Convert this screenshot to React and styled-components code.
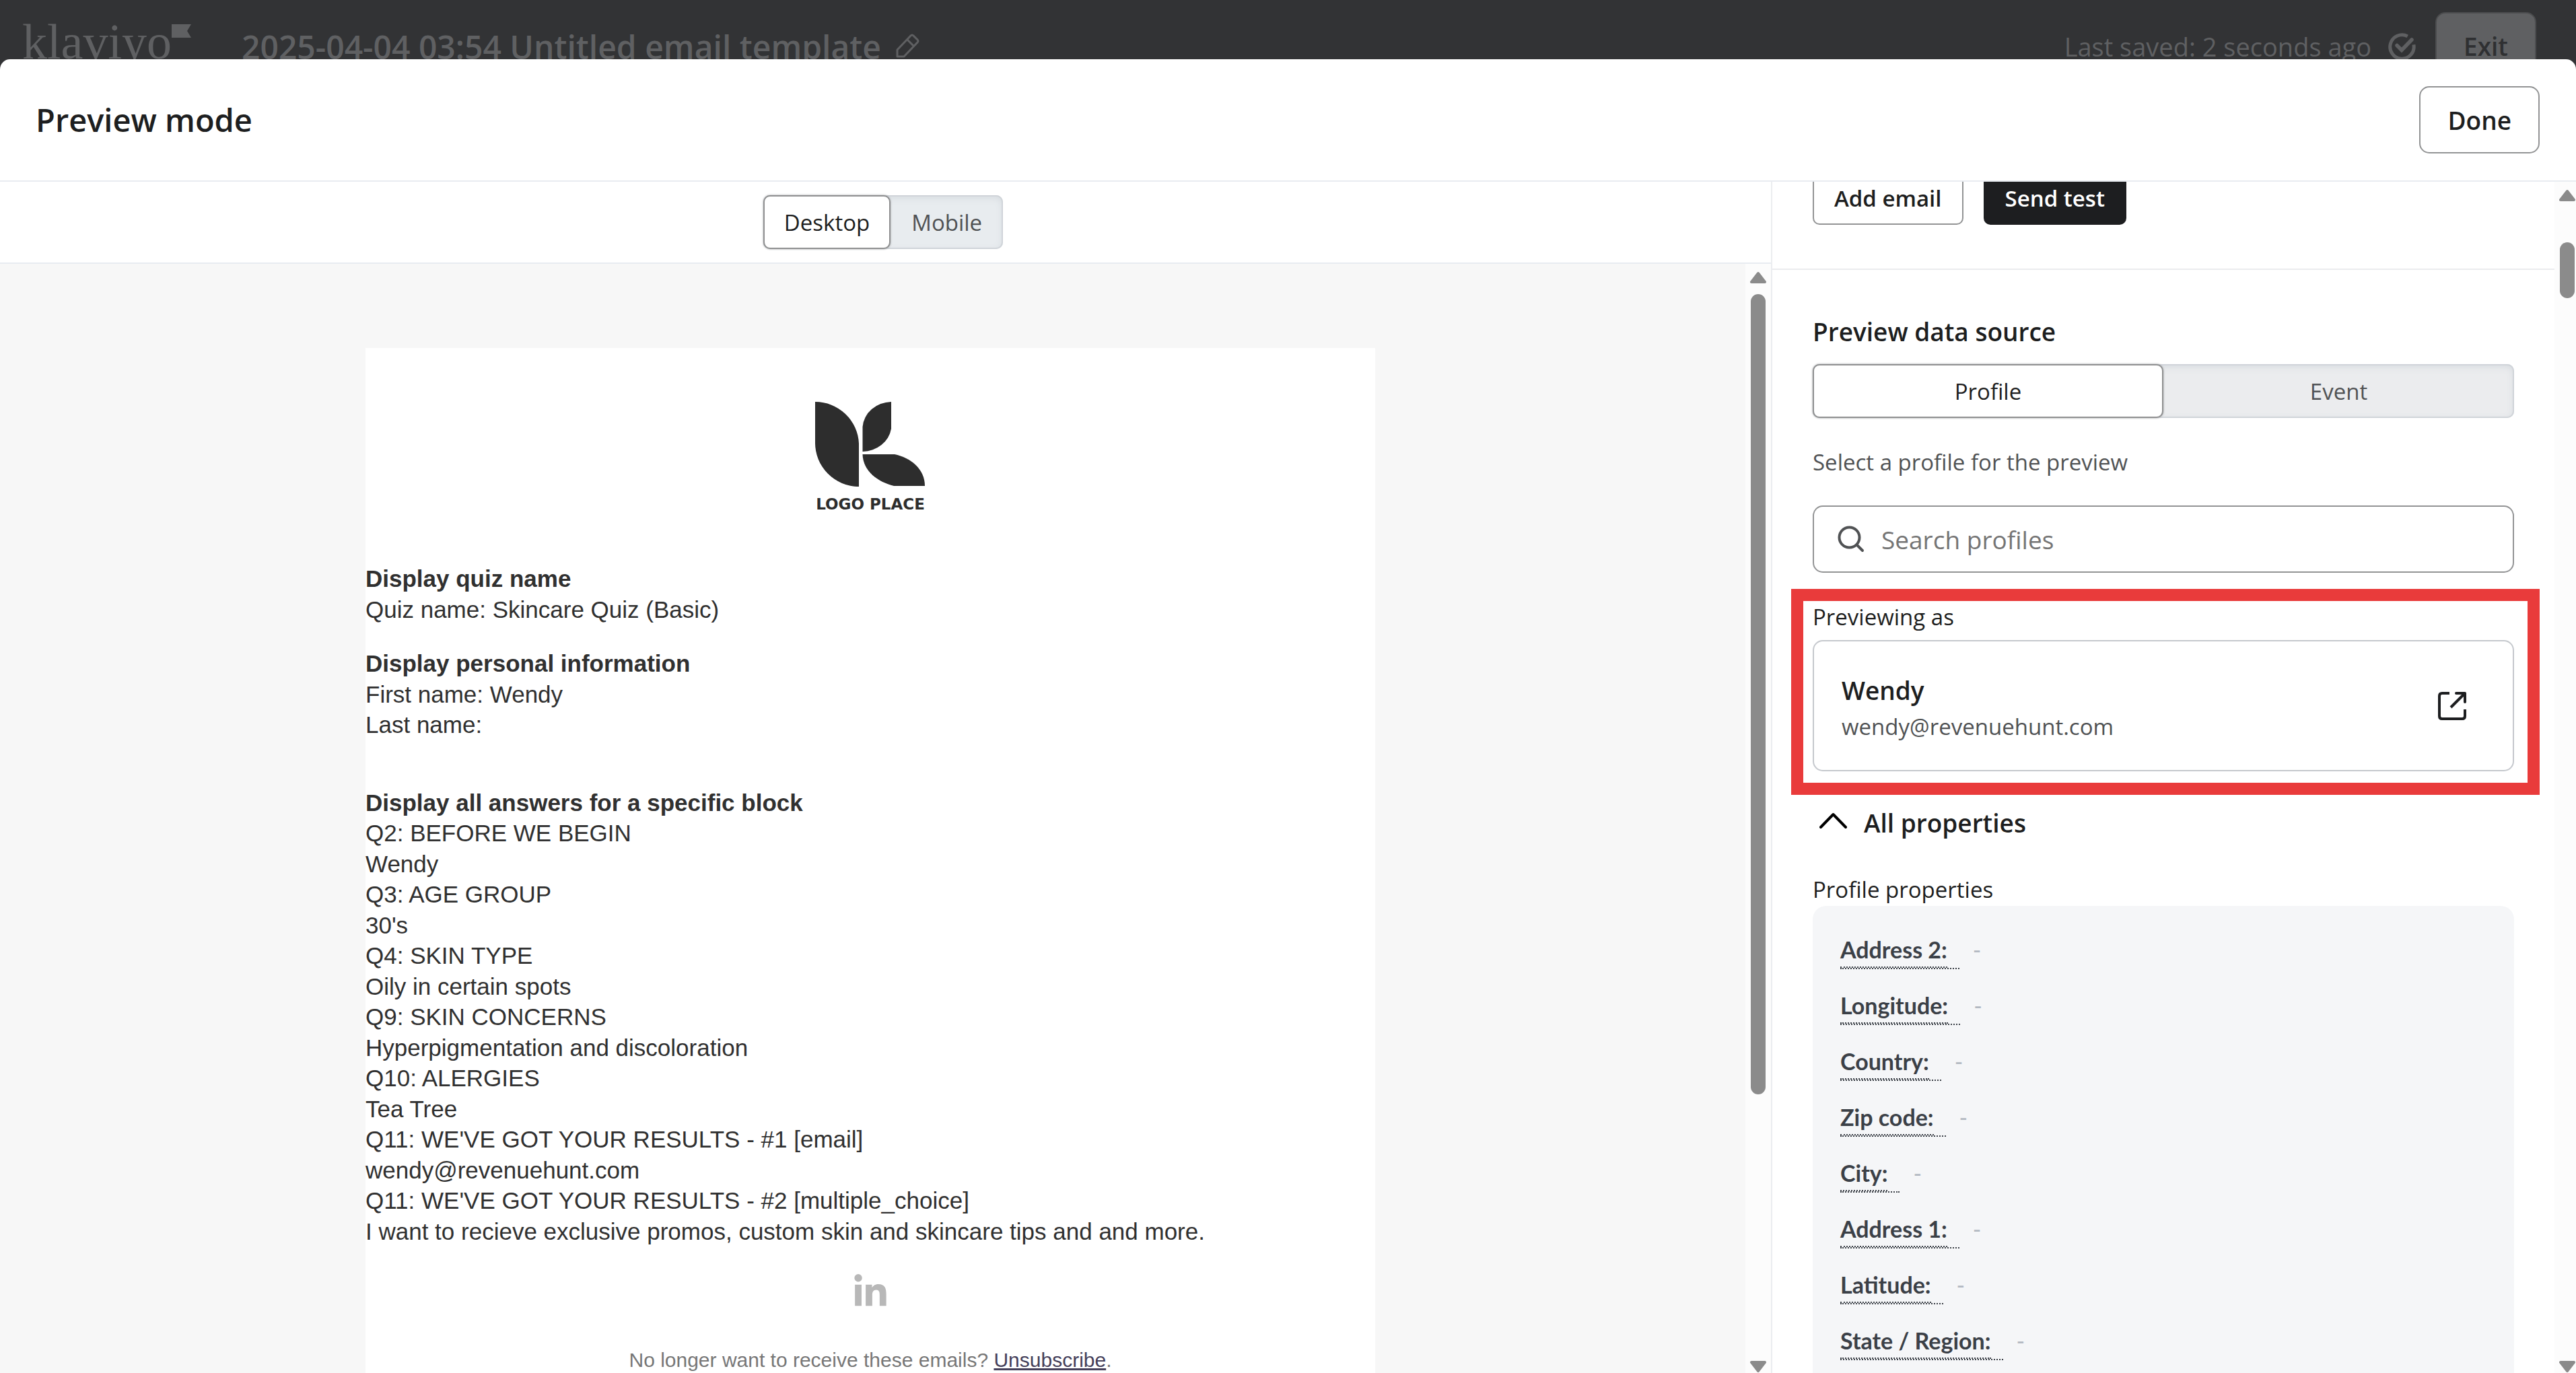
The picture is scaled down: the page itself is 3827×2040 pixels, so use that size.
import React from "react";
import styled, { createGlobalStyle, css } from "styled-components";
import { FaLinkedinIn } from "react-icons/fa";

const ui = `"Open Sans", "Noto Sans", sans-serif`;

const GlobalStyle = createGlobalStyle`
  *, *::before, *::after { box-sizing: border-box; }
  body { margin: 0; background: #323335; font-family: ${ui}; color: #1d1e20; }
  button, input { font-family: inherit; }
  h1, h2, h3, p, dl, dt, dd { margin: 0; }
`;

const Page = styled.div`
  display: flex;
  flex-direction: column;
  height: 100vh;
  overflow: hidden;
  background: #323335;
`;

/* ---------- dimmed editor bar behind the dialog ---------- */

const EditorBar = styled.header`
  flex: none;
  height: 88px;
  overflow: hidden;
`;

const EditorRow = styled.div`
  display: flex;
  align-items: center;
  height: 136px;
  padding: 0 59px 0 33px;
  color: #5f6062;
`;

const Brand = styled.div`
  display: flex;
  align-self: flex-start;
  width: 326px;
  font-family: "Liberation Serif", serif;
  font-size: 74px;
  line-height: 124px;

  svg { margin-top: 36px; }
`;

const TemplateName = styled.h2`
  margin-right: 22px;
  padding-top: 4px;
  font-size: 48px;
  font-weight: 600;
  line-height: 64px;
`;

const SaveState = styled.div`
  display: flex;
  align-items: center;
  gap: 25px;
  margin-left: auto;
  margin-right: 29px;
  padding-top: 2px;
  font-size: 38px;
  line-height: 50px;
`;

const Button = styled.button`
  height: ${(p) => (p.$large ? 100 : 80)}px;
  padding: 0 ${(p) => (p.$large ? 40 : 30)}px;
  border: 2px solid #939495;
  border-radius: ${(p) => (p.$large ? 15 : 10)}px;
  background: #fff;
  color: #1d1e20;
  font-size: ${(p) => (p.$large ? 37 : 33)}px;
  font-weight: 600;
  white-space: nowrap;

  ${(p) => p.$dark && css`
    border-color: #1d1e20;
    background: #1d1e20;
    color: #fff;
  `}
  ${(p) => p.$dimmed && css`
    border-color: #4b4c4e;
    background: #5f6062;
    color: #2f3032;
  `}
`;

/* ---------- dialog ---------- */

const Dialog = styled.section`
  flex: 1;
  min-height: 0;
  display: flex;
  flex-direction: column;
  overflow: hidden;
  border-radius: 15px 15px 0 0;
  background: #fff;
`;

const DialogHeader = styled.header`
  flex: none;
  display: flex;
  align-items: center;
  justify-content: space-between;
  height: 182px;
  padding: 0 54px 0 53px;
  border-bottom: 2px solid #e8ecf1;
`;

const DialogTitle = styled.h1`
  font-size: 47px;
  font-weight: 600;
  line-height: 64px;
`;

const DialogBody = styled.div`
  flex: 1;
  min-height: 0;
  display: grid;
  grid-template-columns: minmax(0, 1fr) 1196px;
`;

const PreviewPane = styled.div`
  min-height: 0;
  display: flex;
  flex-direction: column;
`;

const DeviceBar = styled.div`
  flex: none;
  display: flex;
  justify-content: center;
  align-items: center;
  height: 122px;
  padding-right: 7px;
  border-bottom: 2px solid #e8ecf1;
`;

const Segments = styled.div`
  display: ${(p) => (p.$fill ? "grid" : "inline-grid")};
  grid-template-columns: ${(p) => (p.$fill ? "1fr 1fr" : "auto auto")};
  height: 80px;
  border-radius: 10px;
  background: ${(p) => (p.$fill ? "#ebecee" : "#e8ecef")};
  box-shadow: inset 0 0 0 2px #d0d4d9, inset 0 3px 12px #d3d8dd;
`;

const Segment = styled.button`
  padding: 0 29px;
  border: 2px solid transparent;
  border-radius: 10px;
  background: transparent;
  color: #505254;
  font-size: 33px;

  &[aria-pressed="true"] {
    border-color: #8f9091;
    background: #fff;
    color: #1d1e20;
    box-shadow: 0 0 3px #9b9da0;
  }
`;

const Scrollable = styled.div`
  flex: 1;
  min-height: 0;
  display: flex;
  overflow: hidden;
`;

const Rail = styled.div`
  flex: none;
  display: flex;
  flex-direction: column;
  align-items: center;
  width: ${(p) => p.$width}px;
  padding-top: 11px;
  padding-left: ${(p) => p.$inset}px;
  background: #fcfcfc;
`;

const Track = styled.div`
  flex: 1;
  min-height: 0;
  width: 22px;
  padding-top: ${(p) => p.$start}px;
`;

const Thumb = styled.div`
  height: ${(p) => p.$size}%;
  border-radius: 11px;
  background: #8b8b8b;
`;

const Canvas = styled.div`
  flex: 1;
  min-width: 0;
  padding: 125px 7px 0 0;
  background: #f7f7f7;
`;

/* ---------- email ---------- */

const Email = styled.article`
  max-width: 1500px;
  min-height: 1600px;
  margin: 0 auto;
  padding-top: 80px;
  background: #fff;
  color: #303030;
  font-family: "Liberation Sans", Arial, sans-serif;
  font-size: 35px;
  line-height: 1.3;
`;

const EmailLogo = styled.figure`
  display: flex;
  flex-direction: column;
  align-items: center;
  gap: 12px;
  margin: 0 0 74px;
  color: #2d2d2d;
`;

const LogoName = styled.figcaption`
  font-family: "DejaVu Sans", sans-serif;
  font-size: 23px;
  font-weight: 700;
  line-height: 28px;
`;

const EmailSection = styled.section`
  margin-bottom: ${(p) => p.$after}px;
`;

const EmailHeading = styled.h3`
  font-size: inherit;
  font-weight: 700;
`;

const Social = styled.a`
  display: flex;
  justify-content: center;
  color: #b8b8b8;
`;

const EmailFooter = styled.p`
  margin-top: 54px;
  color: #777;
  font-size: 30px;
  text-align: center;

  a { color: #45405a; }
`;

/* ---------- side panel ---------- */

const SidePane = styled.aside`
  min-height: 0;
  display: flex;
  overflow: hidden;
  border-left: 2px solid #ebedf0;
`;

const SideContent = styled.div`
  flex: 1;
  min-width: 0;
  margin-top: -16px;
`;

const TestActions = styled.div`
  display: flex;
  gap: 30px;
  padding: 0 60px 65px;
  border-bottom: 2px solid #ebecee;
`;

const DataSource = styled.div`
  padding: 67px 60px 0;
`;

const SideTitle = styled.h2`
  margin-bottom: 23px;
  font-size: 37px;
  font-weight: 600;
  line-height: 50px;
`;

const Caption = styled.p`
  font-size: 33px;
  line-height: 44px;
`;

const Hint = styled(Caption)`
  margin: 44px 0 42px;
  color: #505254;
`;

const SearchField = styled.label`
  display: flex;
  align-items: center;
  gap: 25px;
  height: 100px;
  padding: 0 35px;
  border: 2px solid #939495;
  border-radius: 15px;
  color: #505254;

  input {
    flex: 1;
    min-width: 0;
    padding: 0;
    border: 0;
    outline: 0;
    background: transparent;
    font-size: 37px;
  }
  input::placeholder { color: #757575; opacity: 1; }
`;

const Highlight = styled.div`
  margin: 24px -38px 0 -32px;
  padding: 2px 20px 17px 14px;
  border: 18px solid #e93b3b;
`;

const ProfileCard = styled.div`
  display: flex;
  align-items: center;
  justify-content: space-between;
  margin-top: 12px;
  padding: 42px 69px 42px 41px;
  border: 2px solid #c5c8cd;
  border-radius: 15px;
`;

const ProfileText = styled.div`
  padding-top: 6px;
`;

const ProfileName = styled.h3`
  margin-bottom: 7px;
  font-size: 37px;
  font-weight: 600;
  line-height: 50px;
`;

const ProfileEmail = styled(Caption)`
  color: #505254;
`;

const IconLink = styled.a`
  display: flex;
  color: #1d1e20;
`;

const Disclosure = styled.button`
  display: flex;
  align-items: center;
  gap: 25px;
  margin: 17px 0 52px;
  padding: 0 0 0 10px;
  border: 0;
  background: none;
  color: #1d1e20;
  font-size: 37px;
  font-weight: 600;
  line-height: 50px;
`;

const Properties = styled.dl`
  display: flex;
  flex-direction: column;
  gap: 32px;
  margin-top: 2px;
  padding: 43px 41px;
  border-radius: 20px;
  background: #f5f6f8;
  font-family: Lato, sans-serif;
  font-size: 34px;
  line-height: 44px;
`;

const Property = styled.div`
  display: flex;
  gap: 20px;
`;

const PropertyName = styled.dt`
  height: 51px;
  padding-right: 18px;
  border-bottom: 2px dotted #3b4047;
  color: #3b4047;
  font-weight: 700;

  span {
    display: block;
    height: 49px;
    border-bottom: 2px dotted #3b4047;
  }
`;

const PropertyValue = styled.dd`
  color: #b3b9c2;
`;

/* ---------- drawings ---------- */

const Flag = () => (
  <svg width="29" height="20" viewBox="0 0 29 20" fill="currentColor" aria-hidden="true">
    <path d="M0 0H29L23 10L29 20H0Z" />
  </svg>
);

const PencilIcon = () => (
  <svg width="35" height="37" viewBox="0 0 35 37" fill="none" stroke="currentColor" strokeWidth="3" strokeLinejoin="round" aria-hidden="true">
    <path d="M2 34V24L22 3Q24 1 26 3L32 9Q34 11 32 13L12 34ZM17 9L26 18" />
  </svg>
);

const SavedIcon = () => (
  <svg width="41" height="41" viewBox="0 0 41 41" fill="none" stroke="currentColor" strokeWidth="5" aria-hidden="true">
    <path d="M28.8 4.9A17.7 17.7 0 1 0 37.9 17.4" />
    <path d="M13 18.5L20 25.5L35 10" strokeLinecap="round" strokeWidth="5.5" />
  </svg>
);

const SearchIcon = () => (
  <svg width="40" height="40" viewBox="0 0 40 40" fill="none" stroke="currentColor" strokeWidth="4" strokeLinecap="round" aria-hidden="true">
    <circle cx="17.5" cy="17.5" r="15" />
    <path d="M28.5 28.5L37 37" />
  </svg>
);

const OpenIcon = () => (
  <svg width="42" height="42" viewBox="0 0 42 42" fill="none" stroke="currentColor" strokeWidth="4" aria-hidden="true">
    <path d="M17 2H6Q2 2 2 6V36Q2 40 6 40H36Q40 40 40 36V26" />
    <path d="M27 2H40V15" strokeLinecap="round" strokeLinejoin="round" />
    <path d="M40 2L19 23" />
  </svg>
);

const ChevronUp = () => (
  <svg width="41" height="32" viewBox="0 0 41 32" fill="none" stroke="#000" strokeWidth="4" strokeLinecap="round" strokeLinejoin="round" aria-hidden="true">
    <path d="M2 22L20.5 3L39 22" />
  </svg>
);

const Arrow = ({ down }) => (
  <svg width="24" height="18" viewBox="0 0 24 18" fill="#8b8b8b" stroke="#8b8b8b" strokeWidth="4" strokeLinejoin="round" aria-hidden="true">
    <path d={down ? "M2 2H22L12 15Z" : "M2 16H22L12 3Z"} />
  </svg>
);

const LeafLogo = () => (
  <svg width="164" height="126" viewBox="0 0 164 126" fill="currentColor" aria-hidden="true">
    <path d="M0 0A65 65 0 0 1 65 62V126A65 65 0 0 1 0 60Z" />
    <path d="M113 0V40A44 40 0 0 1 70.5 74V37A44 40 0 0 1 113 0Z" />
    <path d="M70.5 78H118C142 83 163 100 163 125H117C93 119 71 103 70.5 78Z" />
  </svg>
);

const Scrollbar = ({ width, inset = 0, start, size }) => (
  <Rail $width={width} $inset={inset} aria-hidden="true">
    <Arrow />
    <Track $start={start}>
      <Thumb $size={size} />
    </Track>
    <Arrow down />
  </Rail>
);

const Switcher = ({ label, options, fill }) => {
  const [active, setActive] = React.useState(options[0]);
  return (
    <Segments role="group" aria-label={label} $fill={fill}>
      {options.map((o) => (
        <Segment key={o} type="button" aria-pressed={o === active} onClick={() => setActive(o)}>
          {o}
        </Segment>
      ))}
    </Segments>
  );
};

const answers = [
  "Q2: BEFORE WE BEGIN",
  "Wendy",
  "Q3: AGE GROUP",
  "30's",
  "Q4: SKIN TYPE",
  "Oily in certain spots",
  "Q9: SKIN CONCERNS",
  "Hyperpigmentation and discoloration",
  "Q10: ALERGIES",
  "Tea Tree",
  "Q11: WE'VE GOT YOUR RESULTS - #1 [email]",
  "wendy@revenuehunt.com",
  "Q11: WE'VE GOT YOUR RESULTS - #2 [multiple_choice]",
  "I want to recieve exclusive promos, custom skin and skincare tips and and more.",
];

const properties = [
  "Address 2", "Longitude", "Country", "Zip code",
  "City", "Address 1", "Latitude", "State / Region",
];

export default function App() {
  return (
    <Page>
      <GlobalStyle />
      <EditorBar>
        <EditorRow>
          <Brand>klaviyo<Flag /></Brand>
          <TemplateName>2025-04-04 03:54 Untitled email template</TemplateName>
          <PencilIcon />
          <SaveState>Last saved: 2 seconds ago <SavedIcon /></SaveState>
          <Button type="button" $large $dimmed>Exit</Button>
        </EditorRow>
      </EditorBar>

      <Dialog role="dialog" aria-labelledby="dialog-title">
        <DialogHeader>
          <DialogTitle id="dialog-title">Preview mode</DialogTitle>
          <Button type="button" $large>Done</Button>
        </DialogHeader>

        <DialogBody>
          <PreviewPane>
            <DeviceBar>
              <Switcher label="Device" options={["Desktop", "Mobile"]} />
            </DeviceBar>
            <Scrollable>
              <Canvas>
                <Email>
                  <EmailLogo>
                    <LeafLogo />
                    <LogoName>LOGO PLACE</LogoName>
                  </EmailLogo>
                  <EmailSection $after={35}>
                    <EmailHeading>Display quiz name</EmailHeading>
                    <p>Quiz name: Skincare Quiz (Basic)</p>
                  </EmailSection>
                  <EmailSection $after={70}>
                    <EmailHeading>Display personal information</EmailHeading>
                    <p>First name: Wendy</p>
                    <p>Last name:</p>
                  </EmailSection>
                  <EmailSection $after={41}>
                    <EmailHeading>Display all answers for a specific block</EmailHeading>
                    {answers.map((line) => <p key={line}>{line}</p>)}
                  </EmailSection>
                  <Social href="#linkedin" aria-label="LinkedIn"><FaLinkedinIn size={54} /></Social>
                  <EmailFooter>
                    No longer want to receive these emails? <a href="#unsubscribe">Unsubscribe</a>.
                  </EmailFooter>
                </Email>
              </Canvas>
              <Scrollbar width={38} start={16} size={75} inset={0} />
            </Scrollable>
          </PreviewPane>

          <SidePane>
            <SideContent>
              <TestActions>
                <Button type="button">Add email</Button>
                <Button type="button" $dark>Send test</Button>
              </TestActions>
              <DataSource>
                <SideTitle>Preview data source</SideTitle>
                <Switcher label="Preview data source" options={["Profile", "Event"]} fill />
                <Hint>Select a profile for the preview</Hint>
                <SearchField>
                  <SearchIcon />
                  <input type="text" placeholder="Search profiles" aria-label="Search profiles" />
                </SearchField>
                <Highlight>
                  <Caption>Previewing as</Caption>
                  <ProfileCard>
                    <ProfileText>
                      <ProfileName>Wendy</ProfileName>
                      <ProfileEmail>wendy@revenuehunt.com</ProfileEmail>
                    </ProfileText>
                    <IconLink href="#profile" aria-label="Open profile"><OpenIcon /></IconLink>
                  </ProfileCard>
                </Highlight>
                <Disclosure type="button" aria-expanded="true"><ChevronUp />All properties</Disclosure>
                <Caption>Profile properties</Caption>
                <Properties>
                  {properties.map((name) => (
                    <Property key={name}>
                      <PropertyName><span>{name}:</span></PropertyName>
                      <PropertyValue>-</PropertyValue>
                    </Property>
                  ))}
                </Properties>
              </DataSource>
            </SideContent>
            <Scrollbar width={32} inset={6} start={61} size={5} />
          </SidePane>
        </DialogBody>
      </Dialog>
    </Page>
  );
}
